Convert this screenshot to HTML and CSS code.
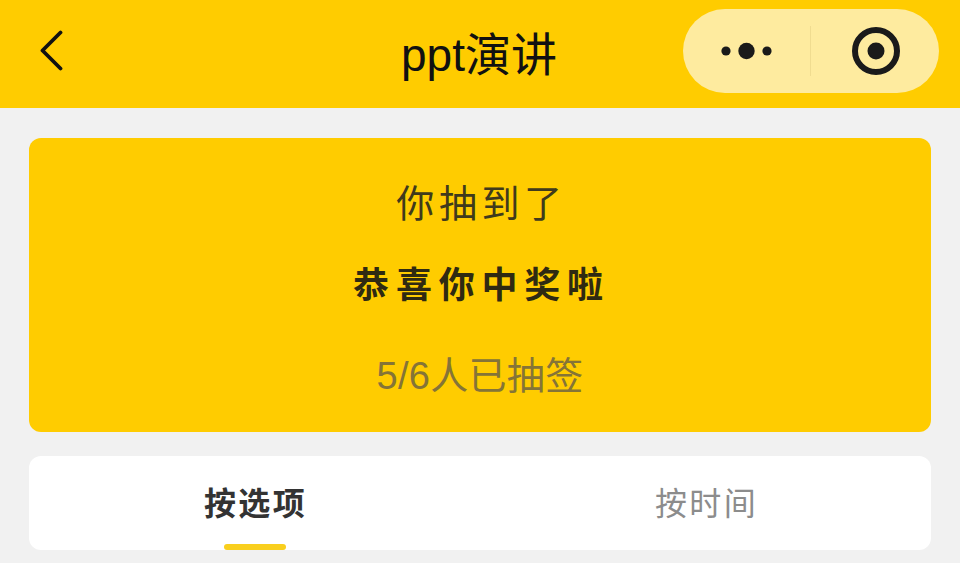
FILE: index.html
```html
<!DOCTYPE html>
<html lang="zh-CN">
<head>
    <meta charset="UTF-8">
    <title>ppt演讲</title>
    <link rel="stylesheet" href="styles.css">
</head>
<body>
    <div class="navbar">
        <svg class="back" width="26" height="42" viewBox="0 0 26 42">
            <path d="M20.5 2.5 L2.5 20.5 L20.5 38.5" fill="none" stroke="#111" stroke-width="3.8" stroke-linecap="round" stroke-linejoin="round"/>
        </svg>
        <div class="title">ppt演讲</div>
        <div class="capsule">
            <div class="capsule-part">
                <svg width="52" height="18" viewBox="0 0 52 18">
                    <circle cx="5" cy="9" r="4.6" fill="#1a1a1a"/>
                    <circle cx="25.5" cy="9" r="8.2" fill="#1a1a1a"/>
                    <circle cx="46" cy="9" r="4.6" fill="#1a1a1a"/>
                </svg>
            </div>
            <div class="capsule-line"></div>
            <div class="capsule-part">
                <svg class="target" width="48" height="48" viewBox="0 0 48 48">
                    <circle cx="24" cy="24" r="21" fill="none" stroke="#1a1a1a" stroke-width="6"/>
                    <circle cx="24" cy="24" r="8.5" fill="#1a1a1a"/>
                </svg>
            </div>
        </div>
    </div>

    <div class="main">
        <div class="result-card">
            <div class="result-label">你抽到了</div>
            <div class="result-name">恭喜你中奖啦</div>
            <div class="result-count">5/6人已抽签</div>
        </div>

        <div class="tabs">
            <div class="tab active">按选项</div>
            <div class="tab">按时间</div>
        </div>
    </div>
</body>
</html>
```

FILE: styles.css
```css
body {
    font-family: "Liberation Sans", "Noto Sans CJK SC", sans-serif;
    background-color: #f1f1f1;
    margin: 0;
    padding: 0;
    height: 563px;
    overflow: hidden;
}

.navbar {
    height: 108px;
    background-color: #ffcc00;
    display: grid;
    grid-template-columns: 1fr auto 1fr;
    align-items: center;
    padding: 0 21px 6px;
    box-sizing: border-box;
}
.back {
    display: block;
    margin-left: 19px;
}
.title {
    font-size: 46px;
    color: #111;
    margin-left: -2px;
}
.capsule {
    justify-self: end;
    width: 256px;
    height: 84px;
    border-radius: 42px;
    background-color: #feeb9f;
    display: flex;
    align-items: center;
}
.capsule-part {
    flex: 1;
    display: flex;
    justify-content: center;
    align-items: center;
}
.target {
    margin-left: 1px;
}
.capsule-line {
    width: 1px;
    height: 50px;
    margin-left: -1px;
    background-color: #f0dc90;
}

.main {
    padding: 30px 29px 0;
}
.result-card {
    height: 294px;
    background-color: #ffcc00;
    border-radius: 12px;
    display: flex;
    flex-direction: column;
    align-items: center;
    box-sizing: border-box;
    padding-top: 40px;
}
.result-label {
    font-size: 38px;
    line-height: 52px;
    letter-spacing: 4.6px;
    padding-left: 3px;
    color: #403a1c;
}
.result-name {
    font-size: 36px;
    line-height: 52px;
    letter-spacing: 6.8px;
    padding-left: 3px;
    font-weight: bold;
    color: #2f2a12;
    margin-top: 30px;
}
.result-count {
    font-size: 38px;
    line-height: 52px;
    letter-spacing: 0.3px;
    color: #857437;
    margin-top: 38px;
}

.tabs {
    margin-top: 24px;
    height: 94px;
    background-color: #fff;
    border-radius: 12px;
    display: flex;
}
.tab {
    flex: 1;
    position: relative;
    text-align: center;
    font-size: 32px;
    line-height: 96px;
    letter-spacing: 2.4px;
    padding-left: 2px;
    color: #8c8c8c;
}
.tab.active {
    font-weight: bold;
    color: #333;
}
.tab.active::after {
    content: "";
    position: absolute;
    left: 50%;
    bottom: 0;
    width: 62px;
    height: 6px;
    margin-left: -31px;
    border-radius: 3px;
    background-color: #f9cf1e;
}
```
